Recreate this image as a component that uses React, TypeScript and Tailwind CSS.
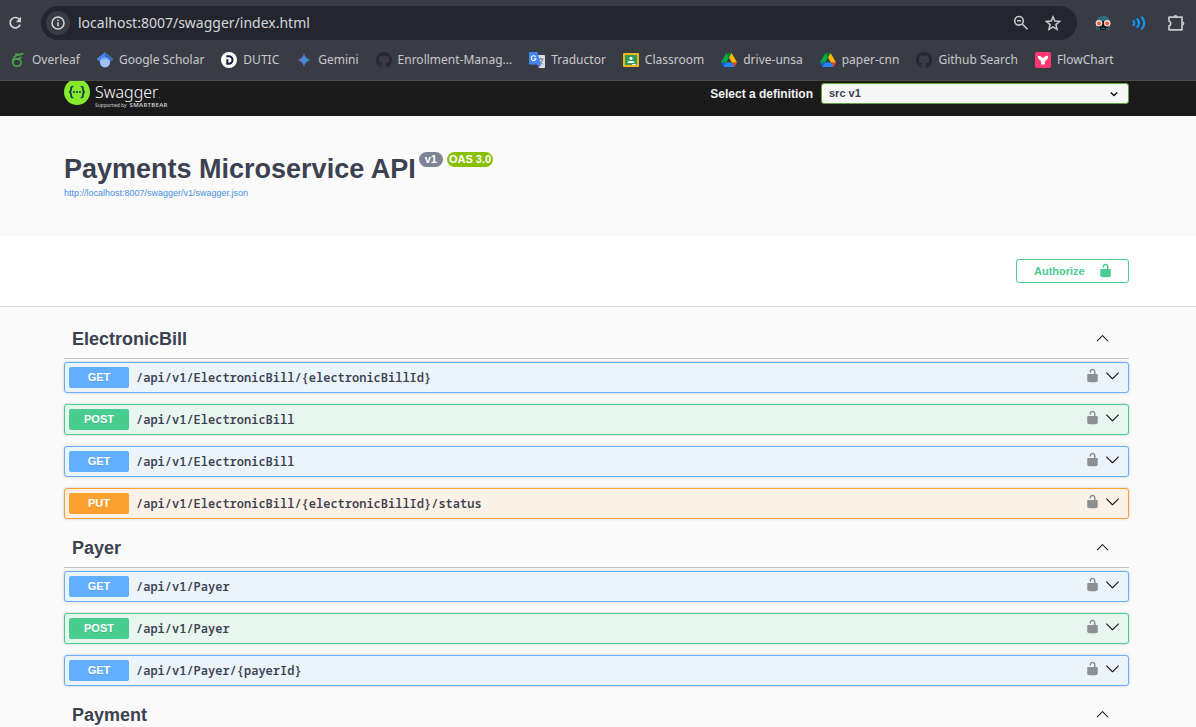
import React from "react";

type Method = "GET" | "POST" | "PUT";
type Operation = { method: Method; path: string };

const sections: { name: string; operations: Operation[] }[] = [
  {
    name: "ElectronicBill",
    operations: [
      { method: "GET", path: "/api/v1/ElectronicBill/{electronicBillId}" },
      { method: "POST", path: "/api/v1/ElectronicBill" },
      { method: "GET", path: "/api/v1/ElectronicBill" },
      { method: "PUT", path: "/api/v1/ElectronicBill/{electronicBillId}/status" },
    ],
  },
  {
    name: "Payer",
    operations: [
      { method: "GET", path: "/api/v1/Payer" },
      { method: "POST", path: "/api/v1/Payer" },
      { method: "GET", path: "/api/v1/Payer/{payerId}" },
    ],
  },
  { name: "Payment", operations: [] },
];

const rowStyle: Record<Method, string> = {
  GET: "border-[#61affe] bg-[#ebf3fb]",
  POST: "border-[#49cc90] bg-[#e8f6f0]",
  PUT: "border-[#fca130] bg-[#fbf1e6]",
};
const badgeStyle: Record<Method, string> = {
  GET: "bg-[#61affe]",
  POST: "bg-[#49cc90]",
  PUT: "bg-[#fca130]",
};

function Lock({ className }: { className: string }) {
  return (
    <svg viewBox="0 0 20 20" className={className} fill="currentColor" aria-hidden="true">
      <path d="M15.8 8H14V5.6C14 2.703 12.665 1 10 1 7.334 1 6 2.703 6 5.6V6h2v-.801C8 3.754 8.797 3 10 3c1.203 0 2 .754 2 2.199V8H4c-.553 0-1 .646-1 1.199V17c0 .549.428 1.139.951 1.307l1.197.387C5.672 18.861 6.55 19 7.1 19h5.8c.549 0 1.428-.139 1.951-.307l1.196-.387c.524-.167.953-.757.953-1.306V9.199C17 8.646 16.352 8 15.8 8z" />
    </svg>
  );
}

function Chevron({ up = false }: { up?: boolean }) {
  return (
    <svg viewBox="0 0 20 20" className="h-[15px] w-[15px]" fill="#111" aria-hidden="true">
      {up ? (
        <path d="M17.418 14.908c-.267.282-.701.271-.969 0L10 8.332l-6.449 6.576c-.268.271-.701.282-.969 0-.268-.281-.268-.709 0-.979l6.908-7.078c.268-.271.701-.271.969 0l6.908 7.078c.318.27.318.698.051.979z" />
      ) : (
        <path d="M17.418 6.109c.272-.268.709-.268.979 0s.271.701 0 .969l-7.908 7.83c-.27.268-.707.268-.979 0l-7.908-7.83c-.27-.268-.27-.701 0-.969.271-.268.709-.268.979 0L10 13.25l7.418-7.141z" />
      )}
    </svg>
  );
}

function OverleafIcon() {
  return (
    <svg viewBox="0 0 16 16" className="h-4 w-4" fill="none" stroke="#46a247" strokeWidth="1.7" aria-hidden="true">
      <ellipse cx="7" cy="10.600" rx="4.200" ry="3.700" />
      <path d="M2.800 11C2.300 7 5 3.800 8.500 2.400M6.500 7.400C8 7 10 6 11.500 5" />
      <path d="M5.200 2.200C8 3.400 10.500 2.600 13.300 1.300" strokeWidth="2" />
    </svg>
  );
}

function ScholarIcon() {
  return (
    <svg viewBox="0 0 16 16" className="h-4 w-4" aria-hidden="true">
      <path d="M8 .5 16 7l-3 2.500H3L0 7z" fill="#a0c3ff" />
      <path d="M0 7 8 .5V9H2.500z" fill="#4285f4" />
      <path d="M8 .5 16 7l-2.500 2H8z" fill="#356ac3" />
      <circle cx="8" cy="10.500" r="5" fill="#a0c3ff" />
      <path d="M3.500 8.300a5 5 0 0 1 9 0 10 10 0 0 0-9 0z" fill="#76a7fa" />
    </svg>
  );
}

function DuticIcon() {
  return (
    <svg viewBox="0 0 16 16" className="h-4 w-4" aria-hidden="true">
      <circle cx="8" cy="8" r="8" fill="#fff" />
      <path d="M5.300 4.200h2.400a3.800 3.800 0 0 1 0 7.600H6.300V7.300" fill="none" stroke="#151c3c" strokeWidth="2" />
    </svg>
  );
}

function GeminiIcon() {
  return (
    <svg viewBox="0 0 16 16" className="h-4 w-4" aria-hidden="true">
      <defs>
        <linearGradient id="gemini" x1="0" x2="1" y1=".4" y2=".6">
          <stop offset="0" stopColor="#9a70aa" />
          <stop offset=".45" stopColor="#4d83dc" />
          <stop offset="1" stopColor="#20a6cd" />
        </linearGradient>
      </defs>
      <path d="M8 1.300c.6 3.700 3 6.100 6.700 6.700-3.700.6-6.100 3-6.700 6.700C7.400 11 5 8.600 1.300 8 5 7.400 7.400 5 8 1.300z" fill="url(#gemini)" />
    </svg>
  );
}

function GithubIcon() {
  return (
    <svg viewBox="0 0 16 16" className="h-4 w-4" fill="#24292f" aria-hidden="true">
      <path d="M8 0C3.580 0 0 3.580 0 8c0 3.540 2.290 6.530 5.470 7.590.4.07.55-.17.55-.38v-1.490c-2.230.48-2.690-.94-2.690-.94-.36-.92-.89-1.170-.89-1.170-.73-.5.05-.49.05-.49.81.06 1.230.83 1.230.83.72 1.230 1.880.87 2.340.67.07-.52.280-.87.510-1.070-1.780-.2-3.640-.89-3.640-3.950 0-.87.310-1.590.820-2.150-.08-.2-.36-1.020.08-2.120 0 0 .67-.21 2.200.82A7.600 7.600 0 0 1 8 3.870c.68 0 1.360.09 2 .27 1.530-1.040 2.200-.82 2.200-.82.440 1.100.160 1.920.080 2.120.510.560.820 1.270.820 2.150 0 3.070-1.870 3.750-3.650 3.950.290.250.540.730.540 1.480v2.190c0 .21.150.46.550.38A8 8 0 0 0 16 8c0-4.420-3.580-8-8-8z" />
    </svg>
  );
}

function TranslateIcon() {
  return (
    <svg viewBox="0 0 16 16" className="h-4 w-4" aria-hidden="true">
      <path d="M6 3h9a1 1 0 0 1 1 1v11a1 1 0 0 1-1 1H9.500z" fill="#dadce0" />
      <path d="M9.500 7h5M12 5.800V7M13.700 7c-.5 2.500-2 4-4 5M10.500 8.500c.8 1.800 2 3 3.600 3.700" fill="none" stroke="#63758a" strokeWidth=".9" />
      <path d="M1 0h7.300L12 12.500H1a1 1 0 0 1-1-1V1a1 1 0 0 1 1-1z" fill="#4285f4" />
      <path d="M8.500 12.500H12L9.500 16z" fill="#3367d6" />
      <path d="M6.600 4.800a2.400 2.400 0 1 0 .4 1.900H4.800" fill="none" stroke="#fff" strokeWidth="1.100" />
    </svg>
  );
}

function ClassroomIcon() {
  return (
    <svg viewBox="0 0 16 16" className="h-4 w-4" aria-hidden="true">
      <rect y="1" width="16" height="14" rx="1" fill="#f4b716" />
      <rect x="2" y="3" width="12" height="10" fill="#2f9b5b" />
      <circle cx="8" cy="6.300" r="1.600" fill="#fff" />
      <path d="M4.500 11V10C5 8.500 11 8.500 11.500 10v1z" fill="#fff" />
      <path d="M9 12h4v1H9z" fill="#e8eaed" />
    </svg>
  );
}

function DriveIcon() {
  return (
    <svg viewBox="0 0 87.300 78" className="h-[14px] w-4" aria-hidden="true">
      <path d="m6.600 66.850 3.850 6.650c.8 1.400 1.950 2.500 3.300 3.300l13.750-23.800H0c0 1.550.4 3.100 1.200 4.500z" fill="#0066da" />
      <path d="M43.650 25 29.900 1.200c-1.350.8-2.500 1.900-3.300 3.300L1.200 48.500A9 9 0 0 0 0 53h27.500z" fill="#00ac47" />
      <path d="M73.550 76.800c1.350-.8 2.500-1.900 3.300-3.300L86.100 57.500c.8-1.400 1.200-2.950 1.200-4.500H59.800l5.850 11.500z" fill="#ea4335" />
      <path d="M43.650 25 57.400 1.200C56.050.4 54.500 0 52.900 0H34.400c-1.600 0-3.150.45-4.500 1.200z" fill="#00832d" />
      <path d="M59.800 53H27.500L13.750 76.800c1.350.8 2.900 1.200 4.500 1.200h50.800c1.600 0 3.150-.45 4.500-1.200z" fill="#2684fc" />
      <path d="M73.400 26.500 60.700 4.500c-.8-1.400-1.950-2.500-3.300-3.300L43.650 25l16.150 28h27.450c0-1.550-.4-3.100-1.200-4.500z" fill="#ffba00" />
    </svg>
  );
}

function FlowIcon() {
  return (
    <svg viewBox="0 0 16 16" className="h-4 w-4" aria-hidden="true">
      <rect width="16" height="16" rx="2" fill="#ff3670" />
      <path d="M2.800 3.700C5 3.600 7 4.600 8 6.500c1-1.900 3-2.900 5.200-2.800.1 2-.8 3.500-2.200 4.500-.8.600-1.100 1.200-1.100 2.100v2.200H6.100v-2.200c0-.9-.3-1.500-1.100-2.100-1.400-1-2.300-2.500-2.200-4.500z" fill="#fff" />
    </svg>
  );
}

const bookmarks: { label: string; icon: React.ReactNode }[] = [
  { label: "Overleaf", icon: <OverleafIcon /> },
  { label: "Google Scholar", icon: <ScholarIcon /> },
  { label: "DUTIC", icon: <DuticIcon /> },
  { label: "Gemini", icon: <GeminiIcon /> },
  { label: "Enrollment-Manag...", icon: <GithubIcon /> },
  { label: "Traductor", icon: <TranslateIcon /> },
  { label: "Classroom", icon: <ClassroomIcon /> },
  { label: "drive-unsa", icon: <DriveIcon /> },
  { label: "paper-cnn", icon: <DriveIcon /> },
  { label: "Github Search", icon: <GithubIcon /> },
  { label: "FlowChart", icon: <FlowIcon /> },
];

function BrowserChrome() {
  return (
    <header className="shrink-0 border-b border-[#4b4b4b] bg-[#3a3c45] font-['Noto_Sans',sans-serif] text-[#c7c9cd]">
      <div className="flex items-center pt-[6px] pr-[11px] pl-2">
        <button aria-label="Reload" className="flex h-4 w-4 items-center justify-center">
          <svg viewBox="0 0 16 16" className="h-4 w-4" fill="none" stroke="#d0d2d6" strokeWidth="1.700" aria-hidden="true">
            <path d="M11.600 4.600A5.200 5.200 0 1 0 12.200 9.700" />
            <path d="M13 1.800v5.400H7.800z" fill="#d0d2d6" stroke="none" />
          </svg>
        </button>
        <div className="ml-[17px] flex h-[34px] flex-1 items-center rounded-full bg-[#23262e] pr-4 pl-[5px]">
          <button aria-label="Site information" className="flex h-6 w-6 items-center justify-center rounded-full bg-[#3a3c45]">
            <svg viewBox="0 0 16 16" className="h-4 w-4" fill="none" stroke="#d4d6da" strokeWidth="1.500" aria-hidden="true">
              <circle cx="8" cy="8" r="6" />
              <path d="M8 7.200V11.200M8 4.600v1.400" />
            </svg>
          </button>
          <input
            aria-label="Address"
            defaultValue="localhost:8007/swagger/index.html"
            className="ml-2 min-w-0 flex-1 bg-transparent text-sm text-[#d6d7da] outline-none"
          />
          <button aria-label="Zoom" className="flex h-4 w-4 items-center justify-center">
            <svg viewBox="0 0 16 16" className="h-4 w-4" fill="none" stroke="#c7c9cd" strokeWidth="1.600" aria-hidden="true">
              <circle cx="6" cy="5.800" r="4.300" />
              <path d="m9.200 9 5.300 5.300M4 5.800h4" />
            </svg>
          </button>
          <button aria-label="Bookmark this page" className="ml-4 flex h-4 w-4 items-center justify-center">
            <svg viewBox="0 0 16 16" className="h-4 w-4" fill="none" stroke="#c7c9cd" strokeWidth="1.500" aria-hidden="true">
              <path d="m8 1.900 1.800 4.200 4.800.4-3.700 3.100 1.200 4.700L8 11.800l-4.100 2.500 1.200-4.700-3.700-3.100 4.800-.4z" />
            </svg>
          </button>
        </div>
        <button aria-label="Incognito extension" className="ml-[18px] flex h-4 w-4 items-center justify-center">
          <svg viewBox="0 0 16 16" className="h-4 w-4" aria-hidden="true">
            <path d="M2 7C2 3 4.500 1 8.500 1S14.500 3.500 14.500 7z" fill="#2f6f7b" />
            <path d="M1 11h14v4H1z" fill="#2c6069" />
            <path d="M2 6h12v4l-1 3H3l-1-3z" fill="#14181f" />
            <circle cx="4" cy="8.300" r="3.300" fill="#f3dcd4" />
            <circle cx="12.200" cy="8.300" r="3.300" fill="#f3dcd4" />
            <circle cx="4" cy="8.500" r="2" fill="#ec5c3c" />
            <circle cx="12.200" cy="8.500" r="2" fill="#ec5c3c" />
            <path d="M5 11.500h6V15H5z" fill="#14181f" />
            <path d="M6 13.500h4" stroke="#36727d" />
          </svg>
        </button>
        <button aria-label="Read aloud" className="ml-5 flex h-4 w-4 items-center justify-center">
          <svg viewBox="0 0 16 16" className="h-4 w-4" fill="none" stroke="#1195f8" strokeWidth="2.200" strokeLinecap="round" aria-hidden="true">
            <path d="M2.500 6q1.600 2 0 4M6.500 4.200q3 3.800 0 7.600M11 2.300q4.400 5.700 0 11.400" />
          </svg>
        </button>
        <button aria-label="Extensions" className="ml-5 flex h-[18px] w-[18px] items-center justify-center">
          <svg viewBox="0 0 18 18" className="h-[18px] w-[18px]" fill="none" stroke="#c7c9cd" strokeWidth="1.700" aria-hidden="true">
            <path d="M2 3.200h13v12.600H2v-3.900a2.500 2.500 0 0 0 0-4.800z" strokeLinejoin="round" />
            <path d="M6.700 3a1.900 1.900 0 0 1 3.800 0zM15.500 7.600a1.900 1.900 0 0 1 0 3.800z" fill="#c7c9cd" stroke="none" />
          </svg>
        </button>
      </div>
      <nav aria-label="Bookmarks" className="flex h-10 items-center gap-[17px] pl-[10px] text-xs whitespace-nowrap">
        {bookmarks.map((b) => (
          <a key={b.label} href="#" className="flex items-center gap-[6px]">
            {b.icon}
            {b.label}
          </a>
        ))}
      </nav>
    </header>
  );
}

function SwaggerLogo() {
  return (
    <a href="#" aria-label="Swagger" className="flex h-7 gap-[5px]">
      <svg viewBox="0 0 26 26" className="h-[26px] w-[26px]" aria-hidden="true">
        <circle cx="13" cy="13" r="13" fill="#85ea2d" />
        <g fill="none" stroke="#173647" strokeWidth="1.700">
          <path d="M9.300 7.500c-2 0-2.300.7-2.200 2.300.1 2-.2 2.800-1.800 3.200 1.600.4 1.900 1.200 1.800 3.200-.1 1.600.2 2.300 2.200 2.300" />
          <path d="M16.700 7.500c2 0 2.300.7 2.200 2.300-.1 2 .2 2.800 1.800 3.200-1.600.4-1.900 1.200-1.800 3.200.1 1.600-.2 2.300-2.200 2.300" />
        </g>
        <g fill="#173647">
          <circle cx="10" cy="13" r="1" />
          <circle cx="13" cy="13" r="1" />
          <circle cx="16" cy="13" r="1" />
        </g>
      </svg>
      <span className="flex flex-col pt-[5px] font-['Noto_Sans',sans-serif] text-white">
        <span className="text-base leading-4 font-light">
          Swagger<span className="text-[6px] leading-none">.</span>
        </span>
        <span className="flex items-center gap-[3px] text-[5px] leading-[10px] whitespace-nowrap text-[#d0d0d0]">
          Supported by <b className="text-[6px] font-semibold tracking-wider">SMARTBEAR</b>
        </span>
      </span>
    </a>
  );
}

export default function App() {
  return (
    <div className="flex h-screen flex-col overflow-hidden bg-[#fafafa] font-['Liberation_Sans',Arial,sans-serif] text-[#3b4151]">
      <BrowserChrome />
      <main className="min-h-0 flex-1 overflow-hidden">
        <div className="flex h-[35px] items-center justify-between overflow-hidden bg-[#1b1b1b] pr-[67px] pb-[11px] pl-16">
          <SwaggerLogo />
          <div className="flex items-center gap-2">
            <label htmlFor="definition" className="pt-[2px] text-xs font-bold text-[#f0f0f0]">
              Select a definition
            </label>
            <div className="relative">
              <select
                id="definition"
                className="block h-[21px] w-[308px] appearance-none rounded-[3px] border border-[#62a03f] bg-[#f7f7f7] px-[7px] text-[11px] font-bold text-[#3b4151]"
              >
                <option>src v1</option>
              </select>
              <svg viewBox="0 0 10 10" className="pointer-events-none absolute top-[6px] right-[10px] h-[10px] w-[10px]" fill="none" stroke="#111" strokeWidth="1.500" aria-hidden="true">
                <path d="m1.800 3.500 3.200 3 3.200-3" />
              </svg>
            </div>
          </div>
        </div>

        <section className="h-[120px] pt-9 pr-[67px] pl-16">
          <div className="flex items-start gap-[3px]">
            <h1 className="text-[27px] leading-[34px] font-bold">Payments Microservice API</h1>
            <div className="flex gap-1 text-[11px] font-bold text-white">
              <span className="flex h-[15px] items-center rounded-full bg-[#7d8492] px-[6px]">v1</span>
              <span className="flex h-[15px] items-center rounded-full bg-[#89bf04] px-[2px]">OAS 3.0</span>
            </div>
          </div>
          <a href="#" className="block text-[9px] leading-[14px] text-[#4990e2]">
            http://localhost:8007/swagger/v1/swagger.json
          </a>
        </section>

        <div className="flex h-[71px] items-center justify-end border-b border-[#dfdfdf] bg-white pr-[67px]">
          <button className="flex h-6 w-[113px] items-center justify-between rounded-[3px] border border-[#49cc90] pr-[15px] pl-[17px] text-[11px] font-bold text-[#49cc90]">
            Authorize
            <span className="pb-[2px]">
              <Lock className="h-[15px] w-[15px]" />
            </span>
          </button>
        </div>

        <div className="pt-[14px] pr-[67px] pl-16">
          {sections.map((s) => (
            <section key={s.name}>
              <div className="mb-[3px] flex h-[38px] items-center justify-between border-b border-[#bfc1c5] pr-[19px] pb-[2px] pl-2">
                <h2 className="text-lg font-bold">{s.name}</h2>
                <button aria-label={`Collapse ${s.name}`} className="pb-[3px]">
                  <Chevron up />
                </button>
              </div>
              {s.operations.map((o) => (
                <div
                  key={o.method + o.path}
                  className={`mb-[11px] flex h-[31px] items-center rounded-[3px] border pr-2 pl-1 shadow-[0_0_3px_rgba(0,0,0,0.19)] ${rowStyle[o.method]}`}
                >
                  <button className="flex min-w-0 flex-1 items-center gap-[7px] text-left">
                    <span className={`flex h-[21px] w-[60px] items-center justify-center rounded-[2px] text-[11px] font-bold text-white [text-shadow:0_1px_0_rgba(0,0,0,0.1)] ${badgeStyle[o.method]}`}>
                      {o.method}
                    </span>
                    <span className="font-['Noto_Sans_Mono','DejaVu_Sans_Mono',monospace] text-xs font-semibold">{o.path}</span>
                  </button>
                  <span className="flex items-center gap-[5px] pb-1">
                    <button aria-label="Authorization" className="text-[#8d9093]">
                      <Lock className="h-[15px] w-[15px]" />
                    </button>
                    <button aria-label="Expand operation">
                      <Chevron />
                    </button>
                  </span>
                </div>
              ))}
            </section>
          ))}
        </div>
      </main>
    </div>
  );
}
